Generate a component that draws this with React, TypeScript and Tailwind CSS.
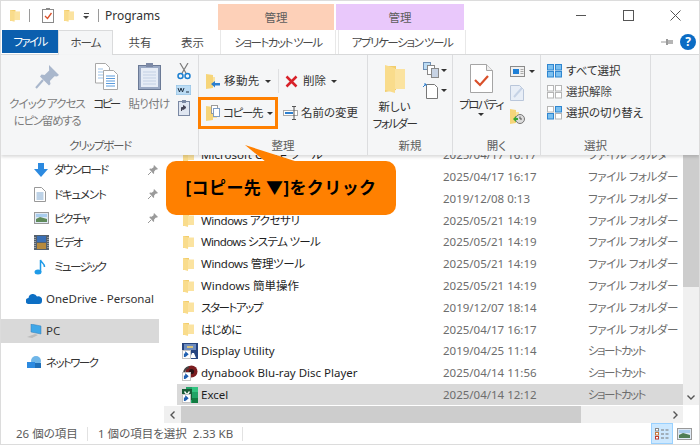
import type { ReactNode } from "react";

const rows = [
  { name: "Microsoft Office ツール", date: "2025/04/17 16:17", type: "ファイル フォルダー", icon: "folder", t: "" },
  { name: "", date: "2025/04/17 16:17", type: "ファイル フォルダー", icon: "folder", t: "" },
  { name: "", date: "2019/12/08 0:13", type: "ファイル フォルダー", icon: "folder", t: "" },
  { name: "Windows アクセサリ", date: "2025/05/21 14:19", type: "ファイル フォルダー", icon: "folder", t: "tracking-[-0.4px]" },
  { name: "Windows システム ツール", date: "2025/05/21 14:19", type: "ファイル フォルダー", icon: "folder", t: "tracking-[-0.65px]" },
  { name: "Windows 管理ツール", date: "2025/05/21 14:19", type: "ファイル フォルダー", icon: "folder", t: "tracking-[-0.3px]" },
  { name: "Windows 簡単操作", date: "2025/05/21 14:19", type: "ファイル フォルダー", icon: "folder", t: "" },
  { name: "スタートアップ", date: "2019/12/07 18:14", type: "ファイル フォルダー", icon: "folder", t: "tracking-[-1.4px]" },
  { name: "はじめに", date: "2025/04/17 16:17", type: "ファイル フォルダー", icon: "folder", t: "tracking-[-1px]" },
  { name: "Display Utility", date: "2019/04/25 11:14", type: "ショートカット", icon: "display", t: "" },
  { name: "dynabook Blu-ray Disc Player", date: "2025/04/14 11:56", type: "ショートカット", icon: "disc", t: "" },
  { name: "Excel", date: "2025/04/14 12:12", type: "ショートカット", icon: "excel", t: "" },
];

function Folder({ w = 11, h = 14 }: { w?: number; h?: number }) {
  return (
    <svg width={w} height={h} viewBox="0 0 11 14">
      <path d="M0 1h6v11l-6 1z" fill="#f2cd6c" />
      <path d="M3 2.500h8V12H3z" fill="#fbe3a0" />
      <path d="M0 1l5 1.500V14L0 12.500z" fill="#f9dc8c" />
    </svg>
  );
}

function Shortcut() {
  return (
    <svg width="9" height="9" viewBox="0 0 9 9" className="absolute left-0 bottom-0">
      <rect x="0.500" y="0.500" width="8" height="8" fill="#fff" stroke="#c4c4c4" />
      <path d="M2.500 7V4.200h2.200M3.800 2.500l2 1.700-2 1.700z" stroke="#1f5fb0" strokeWidth="1.200" fill="#1f5fb0" />
    </svg>
  );
}

function RowIcon({ kind }: { kind: string }) {
  if (kind === "folder") return <Folder />;
  if (kind === "display")
    return (
      <div className="relative w-4 h-4 -ml-px">
        <svg width="16" height="16" viewBox="0 0 16 16">
          <rect width="16" height="16" fill="#27457f" />
          <rect x="2" y="1" width="12" height="6" fill="#6d8cc0" />
          <path d="M5 3h6v2H5z" fill="#d8c27a" />
          <path d="M8 15l2-5h2l2 5z" fill="#fff" />
        </svg>
        <Shortcut />
      </div>
    );
  if (kind === "disc")
    return (
      <div className="relative w-4 h-4 -ml-px">
        <svg width="16" height="16" viewBox="0 0 16 16">
          <circle cx="9.500" cy="6.500" r="6" fill="#7c1d1f" />
          <circle cx="9.500" cy="6.500" r="2.600" fill="#2b1516" />
          <path d="M2 8a7 7 0 0 1 5-6" stroke="#444" strokeWidth="2" fill="none" />
        </svg>
        <Shortcut />
      </div>
    );
  return (
    <div className="relative w-4 h-4 -ml-px">
      <svg width="16" height="16" viewBox="0 0 16 16">
        <rect x="4" y="0" width="12" height="16" fill="#21a366" />
        <rect x="10" y="0" width="6" height="5" fill="#33c481" />
        <rect x="10" y="11" width="6" height="5" fill="#107c41" />
        <rect x="0" y="2" width="10" height="11" fill="#185c37" />
        <path d="M2.500 4.500l5 6.500M7.500 4.500l-5 6.500" stroke="#fff" strokeWidth="1.300" />
      </svg>
      <Shortcut />
    </div>
  );
}

function PinSmall() {
  return (
    <svg width="12" height="12" viewBox="0 0 12 12">
      <path d="M7 1l4 4-1 .6-1.400.1-1.600 2 .2 1.600-.7.7L2.300 5.300 3 4.600l1.600.2 2-1.600.1-1.400z" fill="#9a9a9a" />
      <path d="M4 8L1 11" stroke="#9a9a9a" />
    </svg>
  );
}

function RibbonGroup({ w, label, t, children }: { w: string; label: string; t?: string; children: ReactNode }) {
  return (
    <div className={`${w} h-[100px] shrink-0 flex flex-col border-r border-[#dcdddf]`}>
      <div className="h-[80px] flex">{children}</div>
      <div className={`h-[20px] leading-[22px] text-center text-[#5e5e5e] ${t ?? ""}`}>{label}</div>
    </div>
  );
}

function Arrow() {
  return <span className="inline-block ml-[5px] border-x-[3px] border-x-transparent border-t-[3px] border-t-[#333]" />;
}

function SelectGrid({ on }: { on: boolean[] }) {
  const pos = [
    [0, 0],
    [8, 0],
    [0, 7],
    [8, 7],
  ];
  return (
    <svg width="15" height="14" viewBox="0 0 15 14" className="shrink-0">
      {pos.map(([x, y], i) => (
        <rect
          key={i}
          x={x + 0.5}
          y={y + 0.5}
          width="6"
          height="5.500"
          fill={on[i] ? "#7cc0f0" : "#fff"}
          stroke={on[i] ? "#2f86d0" : "#b5b5b5"}
        />
      ))}
    </svg>
  );
}

function NavItem({ icon, label, t, pin }: { icon: ReactNode; label: string; t: string; pin?: boolean }) {
  return (
    <div className="h-[24.2px] flex items-center pl-[33px] text-[#333]">
      <div className="w-[20px] flex items-center">{icon}</div>
      <span className={`flex-1 ${t}`}>{label}</span>
      {pin && (
        <span className="mr-[3px]">
          <PinSmall />
        </span>
      )}
    </div>
  );
}

export default function App() {
  return (
    <div className="relative w-[700px] h-[445px] overflow-hidden bg-white flex flex-col border border-[#dcdcdc] text-[11.5px] [font-feature-settings:'palt'] font-['Noto_Sans','Noto_Sans_CJK_JP',sans-serif]">
      {/* title bar */}
      <div className="h-[29px] flex items-center shrink-0">
        <div className="ml-[9px] w-[11px]">
          <Folder w={10} h={15} />
        </div>
        <div className="ml-[8px] w-px h-[13px] bg-[#9a9a9a]" />
        <svg width="13" height="15" viewBox="0 0 13 15" className="ml-[12px]">
          <rect x="0.500" y="1.500" width="11" height="13" fill="#fff" stroke="#8a8a8a" />
          <rect x="4" y="0" width="4" height="2" fill="#8a8a8a" />
          <path d="M3 8l2.500 2.500L9.500 5" stroke="#d9502a" strokeWidth="1.300" fill="none" />
        </svg>
        <div className="ml-[9px] w-[11px]">
          <Folder w={10} h={15} />
        </div>
        <div className="ml-[8px] flex flex-col items-center gap-[2px]">
          <div className="w-[5px] h-px bg-[#444]" />
          <div className="border-x-[3px] border-x-transparent border-t-[3px] border-t-[#444]" />
        </div>
        <div className="ml-[9px] w-px h-[13px] bg-[#9a9a9a]" />
        <div className="ml-[6px] text-[12px] text-[#333] w-[113px]">Programs</div>
        <div className="self-end h-[26px] w-[116px] bg-[#fdd0b8] text-center leading-[28px] text-[#5d5d5d]">管理</div>
        <div className="self-end h-[26px] w-[128px] ml-[2px] bg-[#e9c8fb] text-center leading-[28px] text-[#5d5d5d]">管理</div>
        <div className="flex-1 flex items-center justify-end pr-[18px] gap-[36px]">
          <svg width="11" height="11" viewBox="0 0 11 11"><path d="M0 5.500h10" stroke="#555" /></svg>
          <svg width="11" height="11" viewBox="0 0 11 11"><rect x="0.500" y="0.500" width="10" height="10" fill="none" stroke="#555" /></svg>
          <svg width="11" height="11" viewBox="0 0 11 11"><path d="M0.500 0.500l10 10M10.500 0.500l-10 10" stroke="#555" /></svg>
        </div>
      </div>

      {/* tabs */}
      <div className="h-[25px] shrink-0 flex items-stretch text-[#4a4a4a] border-b border-[#dadbdc] relative leading-[25px]">
        <div className="ml-px w-[56px] h-[23px] bg-[#0b5fae] text-white text-center leading-[24px] tracking-[-1.700px]">ファイル</div>
        <div className="w-[55px] h-[25px] bg-[#f5f6f7] border-x border-t border-[#dadbdc] text-center leading-[24px] tracking-[-1px]">ホーム</div>
        <div className="w-[54px] text-center">共有</div>
        <div className="w-[51px] text-center">表示</div>
        <div className="w-[116px] ml-[2px] text-center bg-white border-x border-[#e8e8e8] tracking-[-1.500px]">ショートカット ツール</div>
        <div className="w-[128px] ml-[2px] text-center bg-white border-x border-[#e8e8e8] tracking-[-1.400px]">アプリケーション ツール</div>
        <div className="flex-1 flex items-center justify-end pr-[3px] gap-[6px]">
          <svg width="13" height="8" viewBox="0 0 13 8">
            <path d="M0 4h5" stroke="#9a9a9a" />
            <rect x="5" y="1" width="2" height="6" fill="#9a9a9a" />
            <rect x="7" y="2" width="5" height="4" fill="#b5b5b5" />
          </svg>
          <div className="w-[16px] h-[16px] rounded-full bg-[#0b6cc4] text-white text-[12px] font-bold text-center leading-[16px]">?</div>
        </div>
      </div>

      {/* ribbon */}
      <div className="relative z-10 h-[100px] shrink-0 flex bg-[#f5f6f7] shadow-[0_2px_3px_rgba(0,0,0,0.15)] pl-px">
        <RibbonGroup w="w-[197px]" label="クリップボード" t="tracking-[-1.300px]">
          <div className="w-[90px] shrink-0 flex flex-col items-center text-center text-[#7c7c7c] leading-[17px] pt-[10px]">
            <svg width="24" height="24" viewBox="0 0 24 24" className="mb-[6px]">
              <path d="M14 0l10 10-2 1.500-2.500-.2-4.600 4.600.6 3.100-1.500 1.500-9-9L6.500 9.500l3.100.6 4.600-4.600L14 2.500z" fill="#a9b7cc" />
              <path d="M8 15l-7 8" stroke="#a9b7cc" strokeWidth="2" />
            </svg>
            <div className="whitespace-nowrap tracking-[-1px]">クイック アクセス</div>
            <div className="whitespace-nowrap tracking-[-1.300px]">にピン留めする</div>
          </div>
          <div className="w-[28px] shrink-0 flex flex-col items-center leading-[17px] text-[#333] pt-[8px]">
            <svg width="25" height="27" viewBox="0 0 25 27" className="mb-[5px]">
              <path d="M1.500 0.500h10l4 4V20h-14z" fill="#fff" stroke="#a8a8a8" />
              <path d="M9.500 7.500h10l4 4v15h-14z" fill="#fff" stroke="#a8a8a8" />
              <path d="M4 6h5M4 9h5M4 12h5M4 15h5" stroke="#9cc3ea" />
              <path d="M12 13h9M12 15.500h9M12 18h9M12 20.500h9M12 23h9" stroke="#5b9bdc" />
            </svg>
            <div className="whitespace-nowrap tracking-[-2.500px]">コピー</div>
          </div>
          <div className="w-[58px] shrink-0 flex flex-col items-center leading-[17px] text-[#7c7c7c] pt-[8px]">
            <svg width="23" height="27" viewBox="0 0 23 27" className="mb-[5px]">
              <rect x="0.500" y="2.500" width="22" height="24" fill="#9aa9c4" stroke="#6b7a96" />
              <rect x="3" y="5" width="17" height="19" fill="#e6ecf6" />
              <path d="M5 9h13M5 12h13M5 15h13M5 18h13M5 21h13" stroke="#c3d0e4" />
              <rect x="8" y="0" width="7" height="4" fill="#7d8aa6" />
            </svg>
            <div className="whitespace-nowrap tracking-[-0.700px]">貼り付け</div>
          </div>
          <div className="flex flex-col items-center gap-[5px] pt-[8px] -ml-[2px]">
            <svg width="14" height="17" viewBox="0 0 14 17">
              <path d="M3 0l6.500 11M11 0L4.500 11" stroke="#7b7b7b" strokeWidth="1.200" />
              <circle cx="3.500" cy="13" r="2.500" fill="none" stroke="#1b7fd0" strokeWidth="1.500" />
              <circle cx="10.500" cy="13" r="2.500" fill="none" stroke="#1b7fd0" strokeWidth="1.500" />
            </svg>
            <svg width="15" height="10" viewBox="0 0 15 10">
              <rect width="15" height="10" fill="#bcdcf4" stroke="#8fbfe2" />
              <path d="M2 3l1.500 4L5 3l1.500 4L8 3" stroke="#234" fill="none" />
              <path d="M10 7h3" stroke="#234" />
            </svg>
            <svg width="12" height="16" viewBox="0 0 12 16">
              <rect x="0.500" y="1.500" width="11" height="14" fill="#dfe6f1" stroke="#7a88a3" />
              <rect x="4" y="0" width="4" height="3" fill="#7a88a3" />
              <path d="M3.500 11V7.500h3M5.500 5.500l2.500 2-2.500 2z" stroke="#445" fill="#445" />
            </svg>
          </div>
        </RibbonGroup>

        <RibbonGroup w="w-[169px]" label="整理">
          <div className="flex flex-col pt-[12px] text-[#333]">
            <div className="flex items-center h-[28px]">
              <div className="w-[79px] pl-[7px] flex items-center">
                <svg width="15" height="16" viewBox="0 0 15 16" className="mr-[3px]">
                  <path d="M0 1l7 1v13l-7 1z" fill="#f6d57a" />
                  <path d="M7 4h2v9H7z" fill="#fbe3a0" />
                  <path d="M5 11l4-3v2h5v2.500H9v2z" fill="#2c7fcf" />
                </svg>
                <span className="whitespace-nowrap tracking-[0.400px]">移動先</span>
                <Arrow />
              </div>
              <div className="w-px h-[24px] bg-[#dfe0e2]" />
              <div className="pl-[6px] flex items-center">
                <svg width="13" height="13" viewBox="0 0 13 13" className="mr-[5px]">
                  <path d="M1.500 1.500l10 10M11.500 1.500l-10 10" stroke="#d8222a" strokeWidth="2.500" />
                </svg>
                <span className="whitespace-nowrap">削除</span>
                <Arrow />
              </div>
            </div>
            <div className="flex items-center h-[32px] mt-[2px]">
              <div className="w-[80px] h-[32px] -ml-px shrink-0 border-[3px] border-[#ff8000] pl-[5px] flex items-center">
                <svg width="15" height="16" viewBox="0 0 15 16" className="mr-[2px] shrink-0">
                  <path d="M0 1l7 1v13l-7 1z" fill="#f6d57a" />
                  <path d="M7 4h4v9H7z" fill="#fbe3a0" />
                  <rect x="5.500" y="0.500" width="6" height="8" fill="#fff" stroke="#9a9a9a" />
                  <rect x="7.500" y="3.500" width="6" height="8" fill="#fff" stroke="#7f9ec4" />
                </svg>
                <span className="whitespace-nowrap tracking-[-1.300px]">コピー先</span>
                <Arrow />
              </div>
              <div className="pl-[5px] flex items-center">
                <svg width="16" height="14" viewBox="0 0 16 14" className="mr-[2px]">
                  <rect x="0.500" y="4.500" width="14" height="5" fill="#fff" stroke="#a9a9a9" />
                  <rect x="2" y="6" width="8" height="2" fill="#2c7fcf" />
                  <path d="M9 0.500h4M9 13.500h4M11 0.500v13" stroke="#555" />
                </svg>
                <span className="whitespace-nowrap">名前の変更</span>
              </div>
            </div>
          </div>
        </RibbonGroup>

        <RibbonGroup w="w-[85px]" label="新規">
          <div className="w-[53px] shrink-0 flex flex-col items-center leading-[17px] text-[#333] pt-[10px]">
            <svg width="20" height="28" viewBox="0 0 20 28" className="mb-[5px]">
              <path d="M0 1h11v24L0 27z" fill="#f2cd6c" />
              <path d="M6 4h14v20H6z" fill="#fbe3a0" />
              <path d="M0 0l10 3v25L0 25z" fill="#f9dc8c" />
            </svg>
            <div className="whitespace-nowrap">新しい</div>
            <div className="whitespace-nowrap tracking-[-1.500px]">フォルダー</div>
          </div>
          <div className="flex flex-col gap-[4px] pt-[7px] ml-[2px]">
            <div className="flex items-center">
              <svg width="16" height="16" viewBox="0 0 16 16">
                <rect x="0.500" y="0.500" width="7" height="7" fill="#bcdcf4" stroke="#6e8fb4" />
                <rect x="4.500" y="3.500" width="7" height="9" fill="#fff" stroke="#888" />
                <rect x="8.500" y="6.500" width="7" height="9" fill="#c7d3e4" stroke="#888" />
              </svg>
              <div className="ml-[2px] border-x-[3px] border-x-transparent border-t-[3px] border-t-[#333]" />
            </div>
            <div className="flex items-center">
              <svg width="16" height="17" viewBox="0 0 16 17">
                <path d="M3.500 2.500h8l3 3v11h-11z" fill="#fff" stroke="#777" />
                <path d="M0 5l3-3M3 2H1M3 2v2" stroke="#2c7fcf" />
              </svg>
              <div className="ml-[2px] border-x-[3px] border-x-transparent border-t-[3px] border-t-[#333]" />
            </div>
          </div>
        </RibbonGroup>

        <RibbonGroup w="w-[88px]" label="開く">
          <div className="w-[56px] shrink-0 flex flex-col items-center leading-[17px] text-[#333] pt-[9px]">
            <svg width="23" height="29" viewBox="0 0 23 29" className="mb-[3px]">
              <path d="M0.500 0.500h16l6 6v22H0.500z" fill="#fff" stroke="#a5a5a5" />
              <path d="M16.500 0.500v6h6" fill="#eee" stroke="#a5a5a5" />
              <path d="M5 16l5 5 8-9" stroke="#d9502a" strokeWidth="2.200" fill="none" />
            </svg>
            <div className="whitespace-nowrap tracking-[-1.500px]">プロパティ</div>
            <div className="border-x-[3px] border-x-transparent border-t-[3px] border-t-[#333]" />
          </div>
          <div className="flex flex-col items-start pt-[11px] gap-[8px] ml-[1px]">
            <div className="flex items-center">
              <svg width="15" height="11" viewBox="0 0 15 11">
                <rect x="0.500" y="0.500" width="14" height="10" fill="#f0f0f0" stroke="#8a8a8a" />
                <rect x="3" y="3" width="6" height="5" fill="#1e7fd6" />
                <path d="M10.500 3.500h3M10.500 5.500h3M10.500 7.500h3" stroke="#aaa" />
              </svg>
              <div className="ml-[4px] border-x-[3px] border-x-transparent border-t-[3px] border-t-[#333]" />
            </div>
            <svg width="14" height="16" viewBox="0 0 14 16">
              <path d="M0.500 0.500h9l4 4v11H0.500z" fill="#e8eef7" stroke="#b9c6da" />
              <path d="M4 12L12 3" stroke="#c6d3e6" strokeWidth="2" />
            </svg>
            <svg width="15" height="15" viewBox="0 0 15 15">
              <path d="M0 0l6 1v13l-6 1z" fill="#f6d57a" />
              <path d="M6 3h3v9H6z" fill="#fbe3a0" />
              <circle cx="10" cy="10" r="4.500" fill="#dcdcdc" stroke="#777" />
              <path d="M10 7.500V10h2" stroke="#555" fill="none" />
              <path d="M3 10l3-3v2h2v2H6v2z" fill="#3aa535" />
            </svg>
          </div>
        </RibbonGroup>

        <RibbonGroup w="w-[110px]" label="選択">
          <div className="flex flex-col pt-[7px] pl-[6px] text-[#333] gap-[4px]">
            <div className="h-[17px] flex items-center gap-[4px]">
              <SelectGrid on={[true, true, true, true]} />
              <span className="whitespace-nowrap">すべて選択</span>
            </div>
            <div className="h-[17px] flex items-center gap-[4px] text-[#444]">
              <SelectGrid on={[false, false, false, false]} />
              <span className="whitespace-nowrap">選択解除</span>
            </div>
            <div className="h-[17px] flex items-center gap-[4px]">
              <SelectGrid on={[false, true, true, false]} />
              <span className="whitespace-nowrap">選択の切り替え</span>
            </div>
          </div>
        </RibbonGroup>
      </div>

      {/* body */}
      <div className="flex-1 flex min-h-0">
        <div className="w-[161px] shrink-0 pt-[1px] flex flex-col">
          <div className="mt-[2px]">
            <NavItem
              label="ダウンロード"
              t="tracking-[-1.500px]"
              pin
              icon={
                <svg width="14" height="14" viewBox="0 0 14 14">
                  <path d="M4 0h6v6h4l-7 8-7-8h4z" fill="#2c8ae0" />
                </svg>
              }
            />
            <NavItem
              label="ドキュメント"
              t="tracking-[-1.200px]"
              pin
              icon={
                <svg width="12" height="15" viewBox="0 0 12 15">
                  <path d="M0.500 0.500h7l4 4v10h-11z" fill="#fff" stroke="#999" />
                  <path d="M2.500 6h7M2.500 8h7M2.500 10h7M2.500 12h7" stroke="#7da6cf" />
                </svg>
              }
            />
            <NavItem
              label="ピクチャ"
              t="tracking-[-1.500px]"
              pin
              icon={
                <svg width="15" height="12" viewBox="0 0 15 12">
                  <rect x="0.500" y="0.500" width="14" height="11" fill="#dfe9f4" stroke="#999" />
                  <path d="M2 7l4-2 7 2v3H2z" fill="#5f8a5a" />
                  <rect x="2" y="2" width="11" height="3" fill="#a9cdee" />
                </svg>
              }
            />
            <NavItem
              label="ビデオ"
              t="tracking-[-1.300px]"
              icon={
                <svg width="15" height="15" viewBox="0 0 15 15">
                  <rect width="15" height="15" fill="#55606b" />
                  <rect x="3" y="1" width="9" height="6" fill="#3a6fb5" />
                  <rect x="3" y="8" width="9" height="6" fill="#b68a3d" />
                  <path d="M1 2v11M14 2v11" stroke="#ddd" strokeDasharray="1 1" />
                </svg>
              }
            />
            <NavItem
              label="ミュージック"
              t="tracking-[-1.600px]"
              icon={
                <svg width="12" height="16" viewBox="0 0 12 16">
                  <ellipse cx="4" cy="13" rx="3.500" ry="2.500" fill="#1f9be8" />
                  <path d="M6.500 13V1c1 3 4 3 4 7" stroke="#1f9be8" strokeWidth="1.500" fill="none" />
                </svg>
              }
            />
          </div>
          <div className="h-[32px] mt-[4px] flex items-center pl-[25px] text-[#333]">
            <svg width="16" height="11" viewBox="0 0 16 11" className="mr-[4px]">
              <path d="M3 11a3 3 0 0 1-.5-6A4.500 4.500 0 0 1 11 3.500 3.800 3.800 0 0 1 16 8a3 3 0 0 1-3 3z" fill="#0d6fc4" />
            </svg>
            <span className="whitespace-nowrap">OneDrive - Personal</span>
          </div>
          <div className="h-[24px] mt-[4px] flex items-center pl-[26px] text-[#333] bg-[#d9d9d9] mr-[3px]">
            <svg width="15" height="14" viewBox="0 0 15 14" className="mr-[4px]">
              <path d="M4 0l10 2v8L4 8z" fill="#3fa7e8" stroke="#3a7fb5" strokeWidth="0.500" />
              <path d="M0 13l8-3 3 1-6 3z" fill="#bcbcbc" />
            </svg>
            <span>PC</span>
          </div>
          <div className="h-[32px] mt-[4px] flex items-center pl-[26px] text-[#333]">
            <svg width="15" height="14" viewBox="0 0 15 14" className="mr-[4px]">
              <circle cx="9" cy="5" r="5" fill="#6fb6e8" />
              <rect x="0" y="6" width="8" height="6" fill="#2c8ae0" />
              <rect x="8" y="7" width="6" height="5" fill="#1f6fb8" />
            </svg>
            <span className="tracking-[-1.600px]">ネットワーク</span>
          </div>
        </div>

        <div className="flex-1 min-w-0 flex flex-col">
          <div className="flex-1 min-h-0 flex">
            <div className="flex-1 min-w-0 overflow-hidden">
              <div className="-mt-[11px] pl-[15px]">
                {rows.map((r, i) => (
                  <div
                    key={i}
                    className={`h-[21.8px] flex items-center ${r.name === "Excel" ? "bg-[#d9d9d9]" : ""}`}
                  >
                    <div className="w-[24px] pl-[6px] shrink-0 flex items-center">
                      <RowIcon kind={r.icon} />
                    </div>
                    <div className={`w-[242px] shrink-0 whitespace-nowrap text-[#1f1f1f] ${r.t}`}>{r.name}</div>
                    <div className="w-[145px] shrink-0 whitespace-nowrap text-[#6d6d6d]">{r.date}</div>
                    <div className={`whitespace-nowrap text-[#6d6d6d] ${r.icon === "folder" ? "tracking-[-0.400px]" : "tracking-[-1.600px]"}`}>
                      {r.type}
                    </div>
                  </div>
                ))}
              </div>
            </div>
            <div className="w-[16px] shrink-0 bg-[#f0f0f0] flex flex-col">
              <div className="h-[132px] bg-[#cdcdcd]" />
              <div className="flex-1 flex items-end justify-center pb-[5px]">
                <svg width="8" height="5" viewBox="0 0 8 5"><path d="M0.500 0.500L4 4l3.500-3.500" stroke="#555" strokeWidth="1.400" fill="none" /></svg>
              </div>
            </div>
          </div>
          <div className="h-[17px] shrink-0 flex mr-[16px] mt-px items-stretch bg-[#f0f0f0] ml-[2px]">
            <div className="w-[17px] flex items-center justify-center">
              <svg width="5" height="8" viewBox="0 0 5 8"><path d="M4.500 0.500L1 4l3.500 3.500" stroke="#555" strokeWidth="1.400" fill="none" /></svg>
            </div>
            <div className="w-[400px] bg-[#cdcdcd]" />
            <div className="flex-1 flex items-center justify-end pr-[5px]">
              <svg width="5" height="8" viewBox="0 0 5 8"><path d="M0.500 0.500L4 4 0.500 7.500" stroke="#555" strokeWidth="1.400" fill="none" /></svg>
            </div>
          </div>
        </div>
      </div>

      {/* status bar */}
      <div className="h-[21px] shrink-0 flex items-center text-[#5a5a5a]">
        <span className="ml-[15px] w-[71px]">26 個の項目</span>
        <div className="w-px h-[14px] bg-[#e2e2e2]" />
        <span className="ml-[10px] w-[144px]">1 個の項目を選択&nbsp;&nbsp;2.33 KB</span>
        <div className="w-px h-[14px] bg-[#e2e2e2]" />
        <div className="flex-1 flex items-center justify-end pr-[7px] gap-[4px]">
          <div className="w-[22px] h-[21px] bg-[#cce8ff] border border-[#99d1ff] flex items-center justify-center">
            <svg width="15" height="12" viewBox="0 0 15 12">
              <rect x="0.500" y="0.500" width="3" height="2.500" fill="#fff" stroke="#888" />
              <rect x="0.500" y="4.500" width="3" height="2.500" fill="#fff" stroke="#c9783c" />
              <rect x="0.500" y="8.500" width="3" height="2.500" fill="#fff" stroke="#c0392b" />
              <path d="M6 2h3M10.500 2h3M6 6h3M10.500 6h3M6 10h3M10.500 10h3" stroke="#777" />
            </svg>
          </div>
          <svg width="15" height="12" viewBox="0 0 15 12">
            <rect x="0.500" y="0.500" width="14" height="11" fill="#dfe9f4" stroke="#999" />
            <rect x="2" y="2" width="11" height="3" fill="#a9cdee" />
            <path d="M2 7l4-2 7 2v3H2z" fill="#4f7d54" />
          </svg>
        </div>
      </div>

      {/* callout */}
      <div className="absolute z-20 left-[165px] top-[160px] w-[230px] h-[54px] bg-[#ff8000] rounded-[10px] flex items-center justify-center text-[17px] tracking-[0.400px] font-bold text-black [font-feature-settings:normal] whitespace-nowrap">
        [コピー先 ▼]をクリック
      </div>
      <svg width="60" height="20" viewBox="0 0 60 20" className="absolute z-20 left-[244px] top-[144px]">
        <path d="M0 0L53 17H21z" fill="#ff8000" />
      </svg>
    </div>
  );
}
